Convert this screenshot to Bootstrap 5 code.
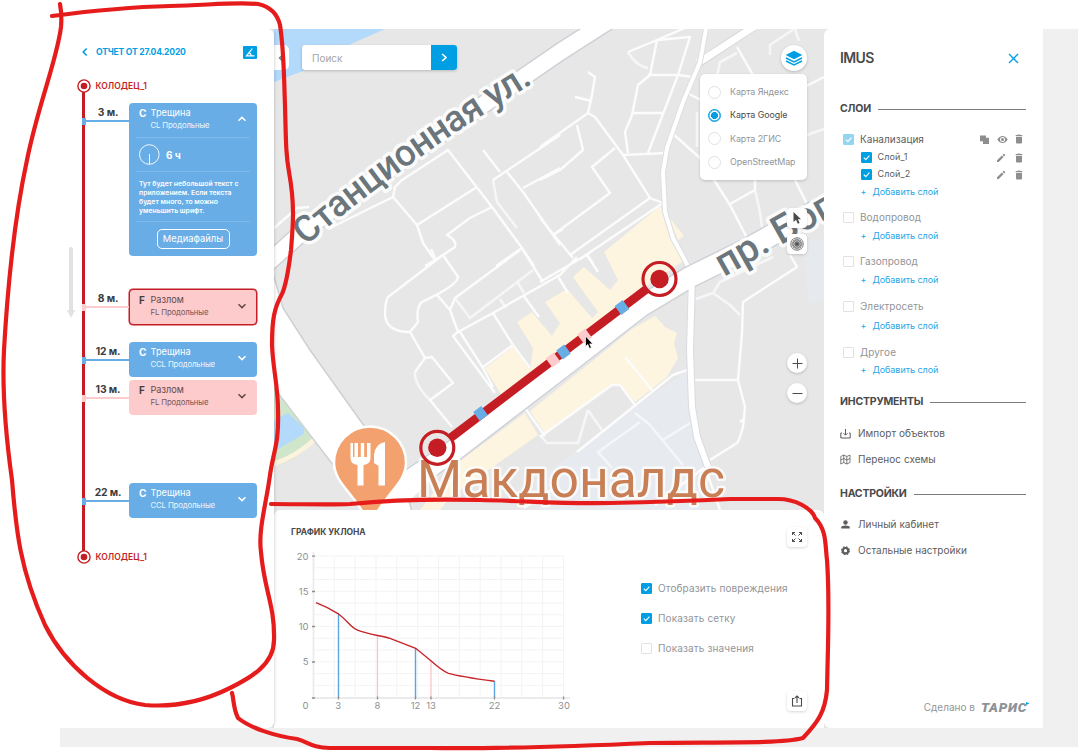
<!DOCTYPE html>
<html lang="ru">
<head>
<meta charset="utf-8">
<meta name="viewport" content="width=device-width, initial-scale=1">
<title>IMUS</title>
<link href="https://cdn.jsdelivr.net/npm/bootstrap@5.3.0/dist/css/bootstrap.min.css" rel="stylesheet">
<style>
  :root { --cy:#009fe3; --crack:#69ade7; --brk:#fdcbcc; --red:#c41d24; --ink:#4a4a4a; --dim:#929598; }
  body { width:1078px; height:752px; overflow:hidden; background:#fff; font-family:Inter,"Open Sans",sans-serif; color:var(--ink); font-size:10px; line-height:1.2; position:relative; }
  .frame { margin:29px 0 0 60px; height:718px; background:#f0f0f0; }
  .app { width:983px; height:699px; background:#e6e6e6; }
  .app svg, .notes { display:block; flex:none; }
  .report { width:214px; background:#fff; border-radius:0 6px 6px 0; position:relative; z-index:2; box-shadow:3px 0 3px -2px rgba(0,0,0,.14); flex:none; }
  .report-head { height:46px; padding:0 17px 0 22px; color:var(--cy); font-weight:700; font-size:8.6px; letter-spacing:-.22px; }
  .angle { width:14px; height:13px; background:var(--cy); border-radius:1px; }
  .well { height:14px; margin-left:17px; gap:4.5px; color:var(--red); font-weight:600; font-size:8.5px; letter-spacing:.05px; }
  .pipe { position:relative; margin-left:24px; height:457px; padding-top:10px; }
  .pipe::before { content:""; position:absolute; left:-2px; top:-1px; bottom:-1px; width:3px; background:var(--red); }
  .dist { width:45px; height:18.5px; border-bottom:2px solid var(--tone); text-align:center; font-weight:700; font-size:10.3px; letter-spacing:-.1px; padding:3px 0 0 3px; position:relative; color:#3c3c3c; }
  .dist::before { content:""; position:absolute; left:-2px; bottom:-5px; width:4px; height:7px; background:var(--tone); }
  .defect { width:128px; background:var(--tone); border-radius:4px; font-size:9.2px; color:#fff; }
  .tone-c { --tone:var(--crack); }
  .tone-f { --tone:var(--brk); }
  .tone-f .defect { color:#65494a; }
  .picked .defect { border:1px solid var(--red); box-shadow:0 0 0 .5px var(--red); }
  .picked .defect-head { height:34px; padding-left:9px; padding-right:9px; }
  .defect-head { height:35px; padding:0 10px 3px 10px; }
  .code { width:11.5px; font-weight:700; font-size:10px; line-height:12px; }
  .tone-f .code { color:#464040; }
  .kind { line-height:12px; font-size:9.2px; }
  .sub { font-size:7.8px; line-height:12px; opacity:.88; letter-spacing:-.15px; }
  .cut { border-top:1px solid #80b9ea; margin:0 7px; }
  .note { font-size:6.85px; font-weight:600; line-height:9px; padding:7px 0 0 10px; height:49px; white-space:nowrap; }
  .media { width:73px; height:20px; border:1px solid #fff; border-radius:5px; background:transparent; color:#fff; font-size:9.4px; padding:0; line-height:1; white-space:nowrap; }
  .flow-arrow { position:absolute; left:-18px; top:154px; }
  .workspace { width:550px; flex:none; }
  .map { height:481px; position:relative; overflow:hidden; }
  .over { position:absolute; }
  .tab { left:-4px; top:16px; width:19px; height:25px; background:#fff; border-radius:0 5px 5px 0; padding-right:5px; }
  .search { left:28px; top:16px; width:155px; height:25px; background:#fff; border-radius:3px; overflow:hidden; box-shadow:0 1px 3px rgba(0,0,0,.2); }
  .search span { color:#a5a5a5; font-size:10px; padding-left:10px; }
  .search b { width:26px; background:var(--cy); }
  .layers { right:17px; top:16px; width:26px; height:26px; }
  .sources { left:426px; top:45px; width:107px; height:106px; background:#fff; border-radius:5px; box-shadow:0 1px 3px rgba(0,0,0,.18); padding:6.500px 0 0 8px; }
  .source { height:23.4px; gap:9px; color:var(--dim); font-size:8.9px; letter-spacing:-.05px; white-space:nowrap; }
  .source.on { color:var(--ink); }
  .dot { width:13px; height:13px; border:1px solid #dce3e5; border-radius:50%; flex:none; }
  .on .dot { border-color:var(--cy); box-shadow:inset 0 0 0 .5px var(--cy); background:radial-gradient(circle,var(--cy) 0 3.2px,#fff 3.800px); }
  .tool { width:20px; height:20px; background:#fff; border-radius:4px; box-shadow:0 1px 3px rgba(0,0,0,.16); }
  .disc { background:#fff; border-radius:50%; box-shadow:0 1px 3px rgba(0,0,0,.2); }
  .slope { height:218px; background:#fff; border-radius:6px 6px 0 0; padding:17px 17px 17px 17px; }
  .slope h2 { font-size:8.5px; font-weight:700; margin:0; line-height:10px; letter-spacing:-.03px; }
  .chart-col { width:350px; }
  .opts { width:146px; padding-top:46px; color:var(--dim); font-size:10px; letter-spacing:.13px; white-space:nowrap; }
  .opts > div { height:30px; gap:6px; }
  .tick { width:11px; height:11px; border:1px solid #e2e2e2; border-radius:1px; flex:none; }
  .tick.yes { background:var(--cy); border-color:var(--cy); }
  .tick.part { background:#93d6f2; border-color:#93d6f2; }
  .tick svg { margin:-1px; }
  .side { width:219px; flex:none; background:#fff; border-radius:6px 0 0 6px; padding:0 17px 0 16px; font-size:10px; position:relative; z-index:1; }
  .side-title { height:58px; font-size:14px; font-weight:600; letter-spacing:-.6px; padding-right:7px; }
  .sect { font-size:10.5px; font-weight:700; gap:7px; letter-spacing:-.2px; padding-top:2px; }
  .sect::after { content:""; flex:1; height:1px; background:#7c7c7c; }
  .layer { height:20px; padding-left:3px; gap:6px; color:var(--dim); letter-spacing:.04px; }
  .layer.lit, .layer-sub { color:#5d5d5d; }
  .layer-sub { height:17px; padding-left:20.5px; gap:6px; font-size:9px; letter-spacing:.15px; }
  .add { height:18px; color:#1fa6e5; font-size:9px; padding-left:20.5px; gap:6px; letter-spacing:-.05px; }
  .acts { color:#8e8e8e; gap:9px; padding-right:3px; }
  .tool-row { height:26px; gap:7px; color:#5d5d5d; letter-spacing:.03px; }
  .made { position:absolute; right:13px; bottom:13px; color:var(--dim); font-size:10px; gap:6px; }
  .brandmark { font:italic 900 13.5px Roboto,sans-serif; letter-spacing:.7px; color:#8d9296; }
  .brandmark svg { margin:3px 0 0 -1px; }
  .notes { position:absolute; left:0; top:0; z-index:9; pointer-events:none; }
</style>
</head>
<body>
<svg width="0" height="0" class="position-absolute">
  <symbol id="tickmark" viewBox="0 0 11 11"><path d="M2.8 5.6l2 2 3.6-4" fill="none" stroke="#fff" stroke-width="1.1"/></symbol>
  <symbol id="down" viewBox="0 0 10 8"><path d="M1.5 2.3L5 5.6l3.5-3.3" fill="none" stroke="currentColor" stroke-width="1.5"/></symbol>
  <symbol id="well" viewBox="0 0 14 14"><circle cx="7" cy="7" r="6.1" fill="#fff" stroke="#c41d24" stroke-width="1.4"/><circle cx="7" cy="7" r="3.3" fill="#c41d24"/></symbol>
  <symbol id="trash" viewBox="0 0 8 10"><path d="M1 2.9h6v5.6q0 .9-.9.9H1.9q-.9 0-.9-.9zM.7 1.1h1.8l.6-.6h1.8l.6.6h1.8v1.1H.7z" fill="currentColor"/></symbol>
  <symbol id="pencil" viewBox="0 0 10 10"><path d="M1 9V7.3l4.9-4.9 1.7 1.7L2.700 9zM6.500 1.800l.9-.9q.4-.3.8 0l.9.9q.3.4 0 .8l-.9.9z" fill="currentColor"/></symbol>
</svg>

<div class="frame">
 <div class="app d-flex">

  <aside class="report">
    <div class="report-head d-flex align-items-center">
      <svg width="14" height="10" viewBox="0 0 14 10"><path d="M5 1.500L1.500 5 5 8.500" transform="translate(-.3 0)" fill="none" stroke="#009fe3" stroke-width="1.600"/></svg>
      <span class="flex-grow-1">ОТЧЕТ ОТ 27.04.2020</span>
      <span class="angle"><svg width="14" height="13"><path d="M9.300 2.500L3.500 9.800H11.500M6 6.600Q8 7.300 8.200 9.600" fill="none" stroke="#fff" stroke-width="1.200"/></svg></span>
    </div>
    <div class="well d-flex align-items-center mt-1"><svg width="14" height="14"><use href="#well"/></svg>КОЛОДЕЦ_1</div>
    <div class="pipe">
      <svg class="flow-arrow" width="10" height="72"><path d="M3 1.500q0-1.500 2-1.500t2 1.500V63h2.200L5 71 .8 63H3z" fill="#e2e2e2"/></svg>
      <div class="d-flex tone-c">
        <div class="dist">3 м.</div>
        <div class="defect" style="height:153px">
          <div class="defect-head d-flex align-items-center" style="height:34px">
            <div class="code align-self-start pt-1">C</div>
            <div class="flex-grow-1"><div class="kind">Трещина</div><div class="sub">CL Продольные</div></div>
            <svg width="10" height="8"><use href="#down" transform="rotate(180 5 4)"/></svg>
          </div>
          <div class="cut"></div>
          <div class="d-flex align-items-center fw-bold" style="height:33px;padding-left:10px;gap:6px;font-size:10px"><svg width="21" height="21"><circle cx="10.300" cy="10.500" r="9.800" fill="none" stroke="#fff" stroke-width=".9"/><path d="M10.500 10v10" stroke="#fff" stroke-width=".9"/></svg>6 ч</div>
          <div class="cut"></div>
          <div class="note">Тут будет небольшой текст с<br>приложением. Если текста<br>будет много, то можно<br>уменьшить шрифт.</div>
          <div class="cut"></div>
          <div class="text-center" style="padding-top:7px"><button class="media">Медиафайлы</button></div>
        </div>
      </div>
      <div class="d-flex tone-f picked" style="margin-top:33px">
        <div class="dist">8 м.</div>
        <div class="defect">
          <div class="defect-head d-flex align-items-center">
            <div class="code align-self-start pt-1">F</div>
            <div class="flex-grow-1"><div class="kind">Разлом</div><div class="sub">FL Продольные</div></div>
            <svg width="10" height="8"><use href="#down"/></svg>
          </div>
        </div>
      </div>
      <div class="d-flex tone-c" style="margin-top:17px">
        <div class="dist">12 м.</div>
        <div class="defect">
          <div class="defect-head d-flex align-items-center">
            <div class="code align-self-start pt-1">C</div>
            <div class="flex-grow-1"><div class="kind">Трещина</div><div class="sub">CCL Продольные</div></div>
            <svg width="10" height="8"><use href="#down"/></svg>
          </div>
        </div>
      </div>
      <div class="d-flex tone-f" style="margin-top:3px">
        <div class="dist">13 м.</div>
        <div class="defect">
          <div class="defect-head d-flex align-items-center">
            <div class="code align-self-start pt-1">F</div>
            <div class="flex-grow-1"><div class="kind">Разлом</div><div class="sub">FL Продольные</div></div>
            <svg width="10" height="8"><use href="#down"/></svg>
          </div>
        </div>
      </div>
      <div class="d-flex tone-c" style="margin-top:68px">
        <div class="dist">22 м.</div>
        <div class="defect">
          <div class="defect-head d-flex align-items-center">
            <div class="code align-self-start pt-1">C</div>
            <div class="flex-grow-1"><div class="kind">Трещина</div><div class="sub">CCL Продольные</div></div>
            <svg width="10" height="8"><use href="#down"/></svg>
          </div>
        </div>
      </div>
    </div>
    <div class="well d-flex align-items-center"><svg width="14" height="14"><use href="#well"/></svg>КОЛОДЕЦ_1</div>
  </aside>

  <main class="workspace d-flex flex-column">
    <section class="map">
      <svg width="550" height="481" viewBox="274 29 550 481">
        <rect x="274" y="29" width="550" height="481" fill="#e7e7e7"/>
        <path d="M274 29H385L351 44 303 71 274 82z" fill="#b3d9fb"/>
        <path d="M274 388L314 440Q300 460 274 466z" fill="#cfe6cb"/>
        <path d="M274 420L288 413 304 428V434L278 449H274z" fill="#b3d9fb"/>
        <path d="M274 464Q297 456 314 440" fill="none" stroke="#fbf3dd" stroke-width="5"/>
        <path d="M802 240H824V300L809 304z" fill="#e6eaee"/>
        <path d="M687 371L655 393 590 440 535 482 540 510H700L708 470 692 420z" fill="#e7ebef"/>
        <g fill="#fdf5df">
          <path d="M604 252L660 206 672 225 682 262 640 290 502 396 485 368 513 347 530 370 533 348 517 322 532 312 552 336 560 323 545 302 567 289 592 318 598 312 573 277 584 267 610 290 618 280z"/>
          <path d="M668 216L684 236 678 240z"/>
          <path d="M655 316L665 327 677 333 674 343 678 358 667 377 635 402 620 384H612L545 433 530 411 590 363 632 329z"/>
          <path d="M525 413L538 435 450 497 440 510H420L456 464z"/>
        </g>
        <!-- service lanes and yards -->
        <g fill="none" stroke="#f5f6f7" stroke-width="2.600" stroke-linejoin="round">
          <path d="M493 180l4 22 20 26M628 52q8 14 20 16M737 53l-17 9-3 14M770 55v-10l24-16M755 190l5 22 2 15M693 300l20-7 17 12 10 10M713 293l7-11 53-25M455 298l15 20 63-48M518 283l6 10M500 299l6 9M415 372q-1 12 15 28M635 413l15 12 33 40M663 440l27-17M640 422l-42 30 14 16M588 410l14 20M588 410l-10 33h-31l-7-8M697 112v35M795 29l4 12M807 135l17-6"/>
        </g>
        <g fill="none" stroke="#fcfcfc" stroke-width="2.400" stroke-linejoin="round">
          <path d="M330 228l63-31 2-10 7-7 46-30 44 57 30 41 12 18M393 197l24 28 6 18 12 17M417 225l60-38M492 207l-22 11-23 17q10 5 8 12l-12 8-18 11M522 248l-26 18M483 150l17 22M560 135l-67 45M507 172l16 20 37 53M523 188l37-20M553 235l10-6M274 228l23-20 12-1"/>
          <path d="M540 147l48-34 4-18 3-18-7-5M575 97l17 4M588 113l7 4 28 38 27 43 13 5M560 135l-20 12M540 180l20-10 23-20-6-25M615 148l-23 19 18 26-57 42M540 218l33 40M570 255l80-57M580 259l83-56M587 255l6 8"/>
          <path d="M628 52l29-12 33-3-12 38-30 78M657 40l-7 35-12 10-6 30-7 17 3 21M648 75h30l15 2M632 113h31M623 155l44-2M672 133l28 25 30 47 17 33M687 93l14 7M737 47l16 28M730 204l25-14v-15M790 170l17 34M795 92l29-15M657 40l30-13"/>
          <path d="M435 258l-4-9M443 255l15 22q0 8-36 25-6 5-4 20l-8 10q-25 0-25-19 0-10 3-16zM410 332l15 26 7-1 21 26-23 17 22 27M425 358l-10 14M437 295l13 15 8 22-5 4 42 57M460 332l23 36 10 19M450 310l5-12 65-48M458 332l35-19 67-38 17-18M493 313l20 32 17 23M513 345l-30 22M523 250l20 32M523 295l16 22M557 275l11 18M540 282l50-29M587 255l11 17M678 250l10 17"/>
          <path d="M693 380h45M790 255l7 12-54 35-1 31-4 47 7 27-2 20q-4 14-6 16l-27 17M740 422l5-4M687 370l-14 5-96 77M625 357l27 33M540 437l72-52h8l15 20M525 408l20 28M655 505l50-38 15 43M524 508l30-20"/>
        </g>
        <!-- avenues -->
        <g fill="none" stroke-linejoin="round">
          <path d="M258 272L300 234 340 203 560 52 610 20" stroke="#cdd1d6" stroke-width="19"/>
          <path d="M258 272L300 234 340 203 560 52 610 20" stroke="#fff" stroke-width="16"/>
          <path d="M700 62L753 27" stroke="#d5d8dc" stroke-width="9"/><path d="M698 63L755 26" stroke="#fff" stroke-width="7"/>
          <path d="M706 29L700 62 683 102 667 148 663 172 665 212 673 238 689 268" stroke="#dcdfe2" stroke-width="6"/>
          <path d="M706 29L700 62 683 102 667 148 663 172 665 212 673 238 689 268" stroke="#fff" stroke-width="4"/>
          <path d="M692 285L690 350 692 407 697 437 708 467" stroke="#d8dbdf" stroke-width="8"/>
          <path d="M385 515L410 480 452 452 560 369 640 307 690 277 745 250 835 200" stroke="#ced2d7" stroke-width="23"/>
          <path d="M385 515L410 480 452 452 560 369 640 307 690 277 745 250 835 200" stroke="#fff" stroke-width="20"/>
          <path d="M692 275L690 350 692 407 697 437 708 467" stroke="#fff" stroke-width="6"/>
          <path d="M272 270V385L330 461 378 512H412L402 475 362 423 310 350 283 308z" fill="#fff" stroke="#cdd1d6" stroke-width="1.500"/>
          <path d="M395 500L404 472 440 448 450 462 410 500z" fill="#fff"/>
        </g>
        <!-- street names -->
        <path id="st1" d="M306 246Q400 164 540 79" fill="none"/>
        <path id="st2" d="M724 277L850 206" fill="none"/>
        <g font-family="Roboto" font-weight="500" font-size="37" fill="#6b767c" stroke="#fff" stroke-opacity=".85" stroke-width="7" stroke-linejoin="round" paint-order="stroke">
          <text textLength="280"><textPath href="#st1" textLength="280">Станционная ул.</textPath></text>
          <text font-size="39"><textPath href="#st2">пр. Бог</textPath></text>
        </g>
        <!-- cafe pin -->
        <path d="M370 426.500a36 36 0 0 1 36 36C406 484 384 494 372 522H368C356 494 334 484 334 462.500a36 36 0 0 1 36-36z" fill="#f3a26f" stroke="#fff" stroke-width="2.500"/>
        <path d="M350.500 443v15q0 6 7 7v20.500h6V465q7-1 7-7V443h-3.500v14h-2.800V443h-3.400v14h-2.800V443h-3.500v14h-1.500V443zM385 442q-10 2-11 13v8l4.500 3v19.500h6.500z" fill="#fff"/>
        <text x="417" y="497" textLength="308" lengthAdjust="spacingAndGlyphs" font-family="Roboto" font-size="51" fill="#c97f55" stroke="#fff" stroke-opacity=".75" stroke-width="5" stroke-linejoin="round" paint-order="stroke">Макдоналдс</text>
        <!-- inspected pipe -->
        <path d="M451 437.500L646 289.500" stroke="#c41d24" stroke-width="8.500"/>
        <g stroke-width="11">
          <path d="M476.500 416.500l8-6M559.500 355l8-6M618 310.500l8-6" stroke="#69ade7"/>
          <path d="M549 363l8-6M580.500 339l8-6" stroke="#fdcbcc"/>
        </g>
        <g fill="none" stroke="#c41d24" stroke-width="3.200"><circle cx="437.300" cy="447.800" r="16.500"/><circle cx="659.500" cy="279" r="16.500"/></g>
        <g fill="#c41d24"><circle cx="437.300" cy="447.800" r="9.200"/><circle cx="659.500" cy="279" r="9.200"/></g>
        <path d="M585.500 336v10.500l2.300-2 1.700 4 1.900-.9-1.700-3.700h3.200z" fill="#000" stroke="#fff" stroke-width=".7"/>
      </svg>
      <div class="over tab d-flex align-items-center justify-content-end"><svg width="6" height="8"><path d="M4.500 1L1.500 4l3 3" fill="none" stroke="#777" stroke-width="1.400"/></svg></div>
      <div class="over search d-flex align-items-stretch"><span class="flex-grow-1 align-self-center">Поиск</span><b class="d-flex align-items-center justify-content-center"><svg width="8" height="9"><path d="M2.200 1L6 4.500 2.200 8" fill="none" stroke="#fff" stroke-width="1.600"/></svg></b></div>
      <div class="over layers disc d-flex align-items-center justify-content-center"><svg width="18" height="16" viewBox="0 0 18 16"><path d="M9 .8L17.300 5 9 9.200.7 5z" fill="#009fe3"/><path d="M1 8l8 4 8-4M1 11l8 4 8-4" fill="none" stroke="#009fe3" stroke-width="1.500"/></svg></div>
      <div class="over sources">
        <div class="source d-flex align-items-center"><i class="dot"></i>Карта Яндекс</div>
        <div class="source on d-flex align-items-center"><i class="dot"></i>Карта Google</div>
        <div class="source d-flex align-items-center"><i class="dot"></i>Карта 2ГИС</div>
        <div class="source d-flex align-items-center"><i class="dot"></i>OpenStreetMap</div>
      </div>
      <div class="over tool d-flex align-items-center justify-content-center" style="right:17px;top:179px"><svg width="10" height="12"><path d="M1.500 0v10l2.500-2.200 1.800 4 1.800-.8-1.700-3.800H9z" fill="#4a4a4a"/></svg></div>
      <div class="over tool d-flex align-items-center justify-content-center" style="right:17px;top:205px"><svg width="14" height="14" viewBox="0 0 14 14"><g fill="none" stroke="#4a4a4a" stroke-width=".6"><circle cx="7" cy="7" r="6.300"/><circle cx="7" cy="7" r="4.200"/><circle cx="7" cy="7" r="2.100"/><path d="M7 .7v12.600M.7 7h12.600M2.500 2.500l9 9M11.500 2.500l-9 9M4.600 1.200l4.800 11.600M9.400 1.200L4.600 12.800M1.200 4.600l11.600 4.800M12.800 4.600L1.200 9.400"/></g></svg></div>
      <div class="over tool disc d-flex align-items-center justify-content-center" style="right:17px;top:324px"><svg width="11" height="11"><path d="M.5 5.500h10M5.500.5v10" stroke="#4a4a4a"/></svg></div>
      <div class="over tool disc d-flex align-items-center justify-content-center" style="right:17px;top:354px"><svg width="11" height="11"><path d="M.5 5.500h10" stroke="#4a4a4a"/></svg></div>
    </section>

    <section class="slope d-flex">
      <div class="chart-col">
        <h2>ГРАФИК УКЛОНА</h2>
        <svg width="300" height="168" viewBox="291 548 300 168" style="margin-top:11px">
          <path d="M334.300 556v141M355.200 556v141M376 556v141M396.800 556v141M417.700 556v141M438.500 556v141M459.300 556v141M480.200 556v141M501 556v141M521.800 556v141M542.700 556v141M563.500 556v141M313 556h250.500M313 567.800h250.500M313 579.500h250.500M313 591.300h250.500M313 603h250.500M313 614.800h250.500M313 626.500h250.500M313 638.300h250.500M313 650h250.500M313 661.800h250.500M313 673.600h250.500M313 685.300h250.500" stroke="#f3f3f3"/>
          <path d="M313.500 552v146M312 698h258" stroke="#ebebeb" stroke-width="1.800" fill="none"/>
          <path d="M338.500 613V698M415.500 648V698M494.500 681V698" stroke="#5ba5e4" stroke-width="1.400"/>
          <path d="M377.500 635V698M431 660V698" stroke="#fac6c8" stroke-width="1.300"/>
          <path d="M312 556.200h3M312 591.500h3M312 626.500h3M312 662h3M312 698h3M338.500 696.500v3M377.500 696.500v3M415.500 696.500v3M431 696.500v3M494.500 696.500v3M563.500 696.500v3" stroke="#8f8f8f" stroke-width="1.300"/>
          <path d="M316 602.700Q327 607 337.500 613.300C347 620 351 628 357.500 630.200 368 634.500 381 635.500 390 638.300L415.700 648.300 430 660Q443 671.500 448.500 673.300 460 676.500 494.500 681.300" fill="none" stroke="#c8242b" stroke-width="1.400"/>
          <g font-size="9.500" fill="#8b9093">
            <g text-anchor="end"><text x="308.500" y="559.500">20</text><text x="308.500" y="594.500">15</text><text x="308.500" y="629.500">10</text><text x="308.500" y="665">5</text><text x="308.500" y="708.500">0</text></g>
            <g text-anchor="middle"><text x="338.300" y="708.500">3</text><text x="377.500" y="708.500">8</text><text x="415.500" y="708.500">12</text><text x="431" y="708.500">13</text><text x="494.500" y="708.500">22</text><text x="564" y="708.500">30</text></g>
          </g>
        </svg>
      </div>
      <div class="opts">
        <div class="d-flex align-items-center"><i class="tick yes"><svg width="11" height="11"><use href="#tickmark"/></svg></i>Отобразить повреждения</div>
        <div class="d-flex align-items-center"><i class="tick yes"><svg width="11" height="11"><use href="#tickmark"/></svg></i>Показать сетку</div>
        <div class="d-flex align-items-center"><i class="tick"></i>Показать значения</div>
      </div>
      <div class="d-flex flex-column justify-content-between">
        <div class="tool d-flex align-items-center justify-content-center"><svg width="12" height="12"><path d="M1.500 4V1.500H4M8 1.500h2.500V4M10.500 8v2.500H8M4 10.500H1.500V8M1.500 1.500l3 3M10.500 1.500l-3 3M10.500 10.500l-3-3M1.500 10.500l3-3" fill="none" stroke="#4a4a4a"/></svg></div>
        <div class="tool d-flex align-items-center justify-content-center"><svg width="12" height="12"><path d="M3.500 3.500h-2v7.500h9V3.500h-2M6 8V1M4 2.800L6 .9l2 1.900" fill="none" stroke="#4a4a4a" stroke-width="1.100"/></svg></div>
      </div>
    </section>
  </main>

  <aside class="side">
    <div class="side-title d-flex align-items-center justify-content-between">IMUS<svg width="11" height="11"><path d="M1 1l9 9M10 1l-9 9" stroke="#009fe3" stroke-width="1.400"/></svg></div>
    <div class="sect d-flex align-items-center" style="height:42px">СЛОИ</div>
    <div class="layer lit d-flex align-items-center"><i class="tick part"><svg width="11" height="11"><use href="#tickmark"/></svg></i><span class="flex-grow-1">Канализация</span>
      <span class="acts d-flex align-items-center" style="gap:7.500px"><svg width="9" height="9"><path d="M0 .5h6v2.300h3V9H3V6.300H0z" fill="currentColor"/></svg><svg width="11" height="9"><path d="M.3 4.500Q2.500 1 5.500 1t5.200 3.500Q8.500 8 5.500 8T.3 4.500z" fill="currentColor"/><circle cx="5.500" cy="4.500" r="2.500" fill="#fff"/><circle cx="5.500" cy="4.500" r="1.500" fill="currentColor"/></svg><svg width="8" height="10"><use href="#trash"/></svg></span></div>
    <div class="layer-sub d-flex align-items-center"><i class="tick yes"><svg width="11" height="11"><use href="#tickmark"/></svg></i><span class="flex-grow-1">Слой_1</span><span class="acts d-flex align-items-center"><svg width="10" height="10"><use href="#pencil"/></svg><svg width="8" height="10"><use href="#trash"/></svg></span></div>
    <div class="layer-sub d-flex align-items-center"><i class="tick yes"><svg width="11" height="11"><use href="#tickmark"/></svg></i><span class="flex-grow-1">Слой_2</span><span class="acts d-flex align-items-center"><svg width="10" height="10"><use href="#pencil"/></svg><svg width="8" height="10"><use href="#trash"/></svg></span></div>
    <div class="add d-flex align-items-center"><span>+</span>Добавить слой</div>
    <div class="layer d-flex align-items-center" style="margin-top:6px"><i class="tick"></i>Водопровод</div>
    <div class="add d-flex align-items-center"><span>+</span>Добавить слой</div>
    <div class="layer d-flex align-items-center" style="margin-top:6px"><i class="tick"></i>Газопровод</div>
    <div class="add d-flex align-items-center"><span>+</span>Добавить слой</div>
    <div class="layer d-flex align-items-center" style="margin-top:7px"><i class="tick"></i>Электросеть</div>
    <div class="add d-flex align-items-center" style="height:20px"><span>+</span>Добавить слой</div>
    <div class="layer d-flex align-items-center" style="margin-top:6px"><i class="tick"></i>Другое</div>
    <div class="add d-flex align-items-center" style="height:17px"><span>+</span>Добавить слой</div>
    <div class="sect d-flex align-items-center" style="height:37px;margin-top:4px">ИНСТРУМЕНТЫ</div>
    <div class="tool-row d-flex align-items-center"><svg width="11" height="11"><path d="M2 5H.8v5h9.400V5H9M5.500 1v6M3.500 5.200l2 2 2-2" fill="none" stroke="currentColor"/></svg>Импорт объектов</div>
    <div class="tool-row d-flex align-items-center"><svg width="11" height="11"><path d="M.8 2.500l3-1.500 3 1.500L10 1v7.500L6.800 10l-3-1.500-3 1.500zM3.800 1v7.500M6.800 2.500V10M.8 6l3-1.500 3 1.500L10 4.500" fill="none" stroke="currentColor" stroke-width=".8"/></svg>Перенос схемы</div>
    <div class="sect d-flex align-items-center" style="height:36px;margin-top:3px">НАСТРОЙКИ</div>
    <div class="tool-row d-flex align-items-center"><svg width="11" height="11"><circle cx="5.500" cy="3.500" r="2.200" fill="currentColor"/><path d="M1.200 9.500V8.500Q1.500 6.600 5.500 6.600t4.300 1.900v1z" fill="currentColor"/></svg>Личный кабинет</div>
    <div class="tool-row d-flex align-items-center"><svg width="11" height="11"><circle cx="5.500" cy="5.700" r="2.700" fill="none" stroke="currentColor" stroke-width="2.200"/><circle cx="5.500" cy="5.700" r="3.900" fill="none" stroke="currentColor" stroke-width="1.200" stroke-dasharray="1.700 1.360"/></svg>Остальные настройки</div>
    <div class="made d-flex align-items-center">Сделано в <span class="brandmark d-flex">ТАРИС<svg width="4" height="4"><path d="M0 0l3.500 1.500L0 3z" fill="#009fe3"/></svg></span></div>
  </aside>
 </div>
</div>

<!-- review marks drawn over the mockup -->
<svg class="notes" width="1078" height="752" fill="none" stroke="#e61c1c" stroke-width="4.200" stroke-linecap="round" stroke-linejoin="round">
  <path d="M52 16C90 11 130 7 170 6S235 2 258 4Q276 8 280 25C284 50 284 80 285 105 286 145 286 155 289 172 295 205 293 225 291 250 288 275 286 285 282 294 274 308 272 320 272 345 273 370 278 385 278 410 279 445 274 448 270 475 266 505 258 530 261 552 264 590 275 605 274 640 274 665 250 678 230 688 200 703 170 707 145 705 105 700 65 665 45 625 20 570 16 530 12 480 5 430 2 390 4 350 8 280 14 220 27 160 38 105 57 60 61 27Q62 15 60 4"/>
  <path d="M271 504C300 504 330 505 350 504 390 500 440 499 480 500 530 501 560 504 610 503 660 502 690 501 730 499H778C795 499 812 508 815 518 827 530 825 545 827 560 830 600 828 640 827 690 825 712 818 722 803 738 780 744 720 742 650 743 560 747 500 749 430 748H330C312 748 308 742 297 739 275 736 250 728 238 718 233 708 234 700 232 693"/>
</svg>
<script src="https://cdn.jsdelivr.net/npm/bootstrap@5.3.0/dist/js/bootstrap.bundle.min.js"></script>
</body>
</html>
